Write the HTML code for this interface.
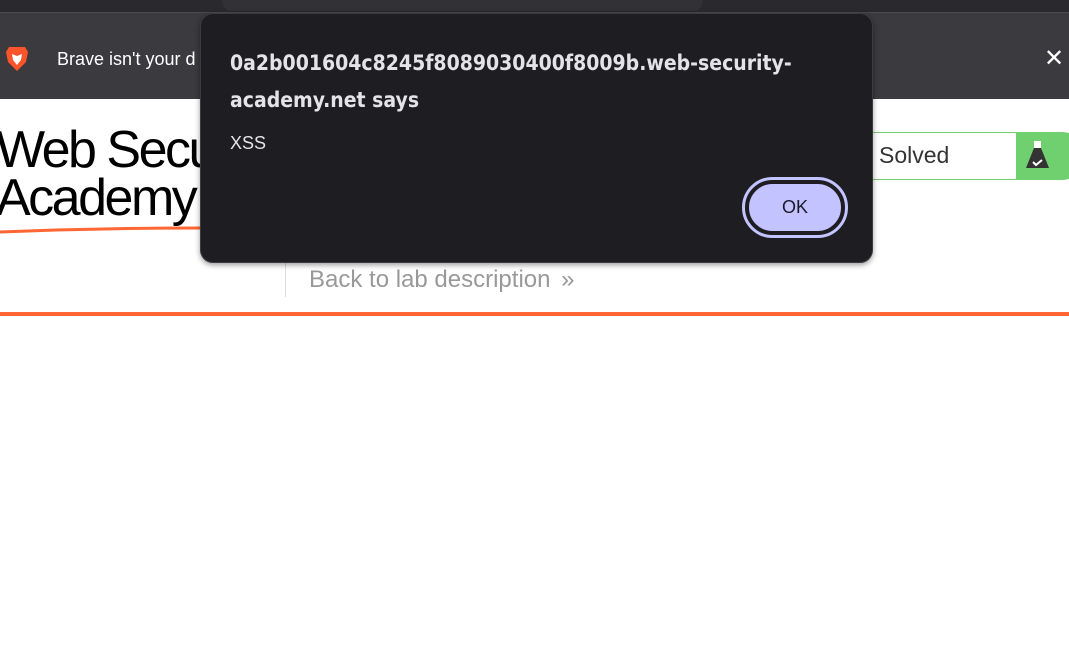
<!DOCTYPE html>
<html><head><style>
body{margin:0;width:1069px;height:659px;overflow:hidden;background:#fff;font-family:"Liberation Sans",sans-serif;position:relative}
.a{position:absolute}
</style></head><body>
<div class="a" style="left:0;top:0;width:1069px;height:12px;background:#2a292e"></div>
<div class="a" style="left:222px;top:-10px;width:481px;height:21px;background:#323136;border-radius:10px"></div>
<div class="a" style="left:0;top:12px;width:1069px;height:86px;background:#3b3a3f;border-top:1px solid #4a494e"></div>
<svg class="a" style="left:5px;top:45px" width="24" height="28" viewBox="0 0 24 28"><path d="M4 2h16l3 5-2 10-9 9-9-9-2-10z" fill="#fb542b"/><path d="M7 9l5 2 5-2-1 6-4 5-4-5z" fill="#fff"/></svg>
<div class="a" style="left:57px;top:49px;color:#fff;font-size:18px">Brave isn't your d</div>
<div class="a" style="left:1044px;top:44px;color:#fff;font-size:24px">✕</div>
<div class="a" style="left:-4px;top:126px;font-size:52px;letter-spacing:-2.5px;line-height:48px;color:#000">Web Security<br>Academy</div>
<svg class="a" style="left:0;top:224px" width="200" height="12"><path d="M0 8 Q100 4 200 4" stroke="#ff6633" stroke-width="3" fill="none"/></svg>
<div class="a" style="left:860px;top:132px;width:160px;height:46px;border:1px solid #70d070;border-right:none"></div>
<div class="a" style="left:879px;top:142px;font-size:23px;color:#333">Solved</div>
<div class="a" style="left:1016px;top:132px;width:70px;height:48px;background:#70d070;border-radius:0 24px 24px 0"></div>
<svg class="a" style="left:1024px;top:140px" width="28" height="32" viewBox="0 0 28 32"><rect x="10" y="1" width="7" height="7" fill="#fff"/><path d="M10 8h7l8 20H2z" fill="#333"/><path d="M9 22l3 3 6-5" stroke="#fff" stroke-width="2" fill="none"/></svg>
<div class="a" style="left:285px;top:262px;width:1px;height:35px;background:#ddd"></div>
<div class="a" style="left:309px;top:266px;font-size:24px;color:#999">Back to lab description <span style="font-size:24px;margin-left:4px">»</span></div>
<div class="a" style="left:0;top:312px;width:1069px;height:4px;background:#ff6633"></div>
<div class="a" style="left:200px;top:13px;width:671px;height:248px;background:#1e1d22;border:1px solid #3c3b40;border-radius:13px;box-shadow:0 2px 6px rgba(0,0,0,.4)"></div>
<div class="a" style="left:230px;top:45px;font-size:21px;line-height:37px;color:#e3e3e8;font-weight:bold;font-family:'DejaVu Sans Condensed','Liberation Sans',sans-serif;width:620px">0a2b001604c8245f8089030400f8009b.web-security-<br>academy.net says</div>
<div class="a" style="left:230px;top:133px;font-size:18px;color:#e3e3e8">XSS</div>
<div class="a" style="left:742px;top:177px;width:100px;height:55px;border:3px solid #c2c3ff;border-radius:32px"></div>
<div class="a" style="left:747px;top:182px;width:96px;height:51px;background:#c2c3ff;border:2px solid #1e1d22;border-radius:28px;box-sizing:border-box;text-align:center;line-height:47px;font-size:18px;color:#1a1a2a">OK</div>
</body></html>
